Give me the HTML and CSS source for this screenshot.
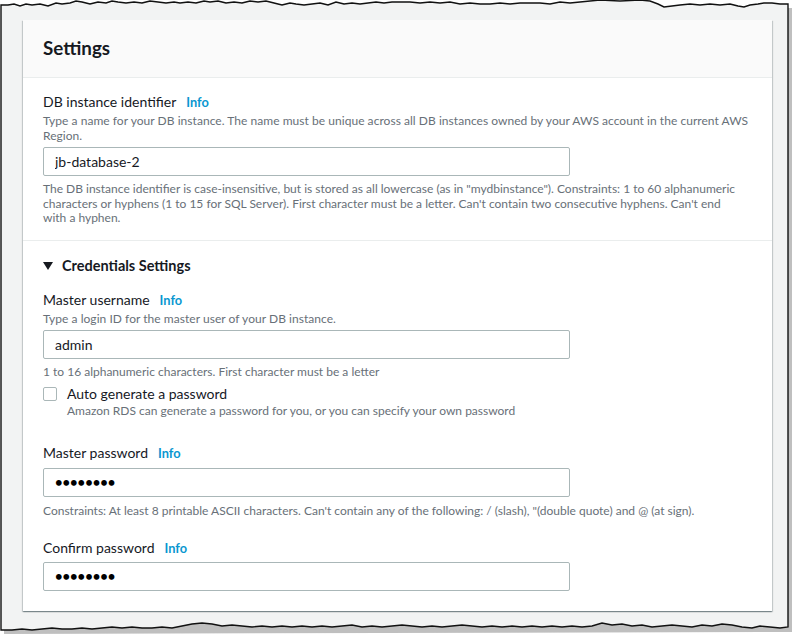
FILE: index.html
```html
<!DOCTYPE html>
<html lang="en">
<head>
<meta charset="utf-8">
<title>Settings</title>
<link rel="stylesheet" href="styles.css">
</head>
<body>
<div class="frame">
  <svg class="torn" width="800" height="642" viewBox="0 0 800 642" aria-hidden="true">
    <path class="torn-shadow" d="M4 9 L4 634 L792 632 L792 8 Z"/>
    <path class="torn-paper" d="M1 5 L8 5 L14 4 L20 6 L26 4 L32 5 L40 4 L48 6 L56 3 L62 4 L70 3 L76 1 L82 2 L90 4 L98 2 L106 3 L112 1 L118 2 L126 3 L134 2 L142 3 L150 1 L158 2 L166 3 L174 2 L180 3 L188 2 L196 3 L204 1 L210 2 L218 1 L226 3 L234 2 L242 3 L250 1 L258 2 L266 1 L274 3 L282 5 L290 3 L296 4 L304 5 L312 4 L320 3 L328 5 L336 2 L344 4 L352 3 L360 4 L368 3 L376 2 L384 3 L392 2 L400 2 L410 2 L420 3 L430 2 L440 3 L450 2 L460 4 L470 3 L480 4 L490 4 L500 3 L510 4 L520 3 L530 3 L540 3 L550 4 L560 2 L570 3 L580 2 L590 1 L600 0 L620 1 L640 0 L650 1 L658 4 L664 7 L672 6 L680 5 L690 4 L700 5 L710 4 L720 5 L730 4 L738 6 L744 7 L750 5 L758 4 L764 3 L772 3 L780 4 L788 4 L788 627 L780 628 L770 627 L760 626 L752 628 L742 627 L732 625 L722 624 L712 626 L702 625 L692 627 L682 626 L672 625 L662 626 L652 627 L642 625 L632 626 L622 624 L612 625 L602 623 L592 626 L582 627 L572 626 L562 627 L552 626 L542 627 L532 626 L522 627 L512 626 L502 627 L492 626 L482 627 L472 626 L462 625 L452 626 L442 627 L432 626 L422 627 L412 626 L402 625 L392 626 L382 627 L372 626 L362 627 L352 625 L342 626 L332 627 L322 626 L312 627 L302 626 L292 627 L282 626 L272 627 L262 626 L252 627 L242 626 L232 625 L222 626 L212 624 L202 623 L192 624 L182 626 L172 628 L162 627 L152 628 L142 628 L132 627 L122 628 L112 627 L102 628 L92 629 L82 628 L72 629 L62 629 L52 628 L42 629 L32 630 L22 629 L12 630 L1 630 Z"/>
  </svg>
  <main class="page">
    <section class="card">
      <header class="card-header">
        <h2 class="card-title">Settings</h2>
      </header>
      <div class="section">
        <div class="field">
          <div class="label-row"><span class="label">DB instance identifier</span><a class="info">Info</a></div>
          <p class="desc">Type a name for your DB instance. The name must be unique across all DB instances owned by your AWS account in the current AWS Region.</p>
          <input class="input" type="text" value="jb-database-2">
          <p class="hint hint-first">The DB instance identifier is case-insensitive, but is stored as all lowercase (as in "mydbinstance"). Constraints: 1 to 60 alphanumeric characters or hyphens (1 to 15 for SQL Server). First character must be a letter. Can't contain two consecutive hyphens. Can't end with a hyphen.</p>
        </div>
      </div>
      <div class="section section-cred">
        <div class="expander">
          <svg class="caret" width="10" height="8" viewBox="0 0 10 8"><path d="M0 0 H10 L5 8 Z"/></svg>
          <span class="expander-title">Credentials Settings</span>
        </div>
        <div class="field field-user">
          <div class="label-row"><span class="label">Master username</span><a class="info">Info</a></div>
          <p class="desc">Type a login ID for the master user of your DB instance.</p>
          <input class="input" type="text" value="admin">
          <p class="hint hint-short">1 to 16 alphanumeric characters. First character must be a letter</p>
        </div>
        <label class="check">
          <span class="box"></span>
          <span class="check-text">
            <span class="check-label">Auto generate a password</span>
            <span class="check-desc">Amazon RDS can generate a password for you, or you can specify your own password</span>
          </span>
        </label>
        <div class="field field-pw">
          <div class="label-row"><span class="label">Master password</span><a class="info">Info</a></div>
          <div class="input pw">••••••••</div>
          <p class="hint hint-pw">Constraints: At least 8 printable ASCII characters. Can't contain any of the following: / (slash), "(double quote) and @ (at sign).</p>
        </div>
        <div class="field field-confirm">
          <div class="label-row"><span class="label">Confirm password</span><a class="info">Info</a></div>
          <div class="input pw">••••••••</div>
        </div>
      </div>
    </section>
  </main>
</div>
</body>
</html>
```

FILE: styles.css
```css
* { box-sizing: border-box; }
html, body { margin: 0; padding: 0; background: #ffffff; }
body {
  font-family: Lato, "Open Sans", "Liberation Sans", sans-serif;
  color: #16191f;
  width: 800px;
  height: 642px;
  overflow: hidden;
}
.frame {
  position: relative;
  width: 800px;
  height: 642px;
}
.torn {
  position: absolute;
  left: 0;
  top: 0;
}
.torn-shadow {
  fill: #8a8a8a;
  opacity: 0.55;
}
.torn-paper {
  fill: #f2f3f3;
  stroke: #111;
  stroke-width: 1.4;
}
.page {
  position: relative;
  padding: 20px 0 0 23px;
}
.card {
  width: 749px;
  background: #fff;
  box-shadow: 0 1px 1px 0 rgba(0,28,36,.3), 1px 1px 1px 0 rgba(0,28,36,.15), -1px 1px 1px 0 rgba(0,28,36,.15);
}
.card-header {
  height: 58px;
  background: #fafafa;
  border-bottom: 1px solid #eaeded;
  padding: 17px 20px 0;
}
.card-title {
  margin: 0;
  font-size: 18.8px;
  line-height: 22px;
  font-weight: 700;
}
.section {
  padding: 13px 20px 14px;
  border-bottom: 1px solid #eaeded;
}
.section-cred {
  border-bottom: 0;
  padding: 14px 20px 20px;
}
.label-row {
  display: flex;
  align-items: baseline;
  gap: 10px;
  height: 22px;
  line-height: 22px;
}
.label { font-size: 14px; }
.info {
  font-size: 12.8px;
  font-weight: 700;
  color: #0a97d0;
}
.desc {
  margin: 0;
  font-size: 12px;
  line-height: 15px;
  color: #687078;
  max-width: 709px;
  letter-spacing: 0.04px;
}
.input {
  display: block;
  width: 527px;
  height: 29px;
  margin-top: 4px;
  padding: 0 11px;
  border: 1px solid #aab7b8;
  border-radius: 2px;
  font-family: inherit;
  font-size: 14px;
  color: #16191f;
  background: #fff;
  outline: none;
}
.pw {
  line-height: 27px;
  font-size: 13px;
  font-weight: 700;
  letter-spacing: 0;
  color: #000;
}
.hint {
  margin: 6px 0 0;
  font-size: 12px;
  line-height: 14.5px;
  color: #687078;
  max-width: 709px;
}
.hint-first { width: 695px; }
.expander {
  display: flex;
  align-items: center;
  gap: 9px;
  height: 22px;
}
.caret { fill: #16191f; }
.expander-title {
  font-size: 14.5px;
  font-weight: 700;
}
.field-user { margin-top: 12px; }
.hint-short { margin-top: 6px; }
.check {
  display: flex;
  gap: 10px;
  margin-top: 5px;
}
.box {
  flex: none;
  width: 14px;
  height: 14px;
  margin-top: 3px;
  border: 1px solid #aab7b8;
  border-radius: 2px;
  background: #fff;
}
.check-text { display: flex; flex-direction: column; }
.check-label { font-size: 14px; line-height: 20px; }
.check-desc { font-size: 12px; line-height: 14px; color: #687078; }
.field-pw { margin-top: 24px; }
.field-pw .input { margin-top: 4px; }
.hint-pw { margin-top: 7px; }
.field-confirm { margin-top: 18px; }
.field-confirm .input { margin-top: 3px; }
```
